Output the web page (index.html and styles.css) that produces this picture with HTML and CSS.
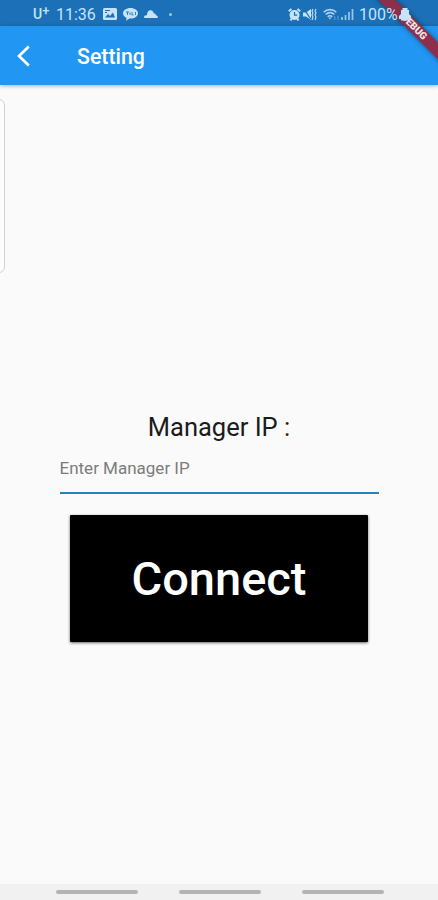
FILE: index.html
```
<!DOCTYPE html>
<html lang="en">
<head>
    <meta charset="UTF-8">
    <meta name="viewport" content="width=device-width, initial-scale=1.0">
    <title>Setting</title>
    <link rel="stylesheet" href="styles.css">
</head>

<body>
    <div class="screen">
        <div class="status-bar">
            <div class="status-left">
                <span class="carrier">U<sup>+</sup></span>
                <span class="time">11:36</span>
                <svg class="icon-picture" width="14" height="12" viewBox="0 0 14 12">
                    <rect width="14" height="12" rx="1.5" fill="currentColor"/>
                    <path d="M2 9.500L5 6l2 2 3-3.500 2 5z" fill="#1b70b8"/>
                    <path d="M2 2.500h5M2 4.500h2" stroke="#1b70b8" stroke-width="1"/>
                </svg>
                <svg class="icon-talk" width="15" height="13" viewBox="0 0 15 13">
                    <path d="M7.500 0C3.300 0 0 2.300 0 5.300c0 2 1.400 3.700 3.600 4.600L3 12.700l3.500-2.200 1 .1c4.200 0 7.500-2.400 7.500-5.300S11.700 0 7.500 0z" fill="currentColor"/>
                    <path d="M3 4h3M4.500 4v3M7 7V4.500M9 4v3h1.500M12.500 4v3" stroke="#1b70b8" stroke-width=".9" fill="none"/>
                </svg>
                <svg class="icon-cloud" width="14" height="8" viewBox="0 0 14 8">
                    <path d="M1.200 8C-.4 8-.3 5.800 1.300 5.500L3 5C3 2 4.500.3 6.500.3c1.800 0 2.800 1.200 3.200 2.900 1.300 0 2 .7 2.300 2 2 .3 2.600 2.800 1 2.800z" fill="currentColor"/>
                </svg>
                <span class="dot"></span>
            </div>
            <div class="status-right">
                <svg width="13" height="13" viewBox="0 0 13 13">
                    <path d="M.8 3.200L3.500 1M12.200 3.200L9.500 1M2.500 12.500l1.300-2M10.500 12.500l-1.300-2" stroke="currentColor" stroke-width="2"/>
                    <circle cx="6.500" cy="7" r="5" fill="currentColor"/>
                    <path d="M6.500 4v3.200h2.700" stroke="#1b70b8" stroke-width="1.200" fill="none"/>
                </svg>
                <svg class="icon-vibrate" width="14" height="13" viewBox="0 0 14 13">
                    <path d="M0 4.500h3L8 1v11L3 8.500H0z" fill="currentColor"/>
                    <path d="M1 1l7 10.500" stroke="#1b70b8" stroke-width="1.300"/>
                    <path d="M10 1l-1 2 1 2-1 2 1 2-1 3M13 1l-1 2 1 2-1 2 1 2-1 3" stroke="currentColor" stroke-width="1.100" fill="none"/>
                </svg>
                <svg class="icon-wifi" width="17" height="13" viewBox="0 0 17 13">
                    <path d="M.7 4.200C4 .7 10 .7 13.300 4.200M2.700 6.500c2.300-2.500 6.300-2.500 8.600 0M4.700 8.700c1.300-1.300 3.300-1.300 4.600 0" stroke="currentColor" stroke-width="1.600" fill="none"/>
                    <path d="M5.300 9.500h3.400L7 11.500z" fill="currentColor"/>
                    <path d="M11.800 8v4M15 8v4" stroke="currentColor" stroke-width="1.200" opacity=".4"/>
                </svg>
                <svg class="icon-signal" width="13" height="13" viewBox="0 0 13 13">
                    <path d="M1 9v3M4.500 7v5M8 4v8M11.500 1v11" stroke="currentColor" stroke-width="1.700"/>
                </svg>
                <span class="percent">100%</span>
                <svg class="icon-battery" width="12" height="13" viewBox="0 0 12 13">
                    <path d="M3.500 0h5v2H10v4l2 2v3h-2v1.500H2V11H0V8l2-2V2h1.500z" fill="currentColor"/>
                </svg>
            </div>
        </div>

        <header class="app-bar">
            <svg class="back" width="14" height="22" viewBox="0 0 14 22">
                <path d="M11.800 1.500L2 11l9.800 9.500" stroke="#fff" stroke-width="2.700" fill="none"/>
            </svg>
            <span class="title">Setting</span>
        </header>

        <main class="content">
            <form class="form" action="#">
                <label class="label" for="manager-ip">Manager IP :</label>
                <input class="ip-input" id="manager-ip" type="text" placeholder="Enter Manager IP">
                <button class="connect" type="button">Connect</button>
            </form>
        </main>

        <div class="nav-bar">
            <span class="nav-line"></span>
            <span class="nav-line"></span>
            <span class="nav-line"></span>
        </div>

        <!-- overlays -->
        <div class="edge-handle"></div>
        <div class="debug-banner">DEBUG</div>
    </div>
</body>

</html>
```

FILE: styles.css
```
* {
    box-sizing: border-box;
}

body {
    margin: 0;
    font-family: Roboto, "Liberation Sans", sans-serif;
}

.screen {
    position: relative;
    display: flex;
    flex-direction: column;
    width: 438px;
    height: 900px;
    overflow: hidden;
    background-color: #fafafa;
}

.status-bar {
    display: flex;
    justify-content: space-between;
    height: 26px;
    padding: 2px 27px 0 33px;
    background-color: #1b70b8;
    color: #c5e3fa;
}

/* the system icons stay above the debug banner */
.status-left,
.status-right {
    position: relative;
    z-index: 3;
    display: flex;
    align-items: center;
}

.carrier {
    width: 23px;
    font-size: 14px;
    font-weight: 500;
    line-height: 20px;
}

.carrier sup {
    font-size: 13px;
    line-height: 0;
    vertical-align: 4px;
}

.time {
    width: 47px;
    font-size: 16px;
}

.icon-talk {
    margin-left: 6px;
}

.icon-cloud {
    margin-left: 6px;
}

.dot {
    width: 3px;
    height: 3px;
    margin-left: 11px;
    border-radius: 50%;
    background-color: #8fc7ef;
}

.icon-vibrate {
    margin-left: 2px;
}

.icon-wifi {
    margin-left: 6px;
    opacity: .85;
}

.icon-signal {
    margin-left: 1px;
    opacity: .75;
}

.percent {
    width: 40px;
    margin-left: 5px;
    font-size: 16px;
}

.app-bar {
    z-index: 1;
    display: flex;
    align-items: center;
    height: 59px;
    padding: 1px 18px 0 17px;
    background-color: #2196f3;
    box-shadow: 0 1px 4px rgba(0, 0, 0, .3);
}

.title {
    margin-left: 46px;
    padding-top: 1px;
    color: #fff;
    font-size: 21.3px;
    font-weight: 500;
}

.content {
    flex: 1;
    display: flex;
    align-items: center;
    justify-content: center;
    padding-top: 84px;
}

.form {
    display: flex;
    flex-direction: column;
    align-items: center;
    width: 319px;
}

.label {
    color: #1c1c1c;
    font-size: 25.5px;
    line-height: 32px;
}

.ip-input {
    width: 100%;
    height: 51px;
    padding: 0;
    border: 0;
    border-bottom: 2px solid #2383c0;
    outline: 0;
    background: none;
    font-family: inherit;
    font-size: 17px;
}

.ip-input::placeholder {
    color: #7c7c7c;
    opacity: 1;
}

.connect {
    width: 298px;
    height: 127px;
    margin-top: 21px;
    padding: 0;
    border: 0;
    border-radius: 1px;
    background-color: #000;
    box-shadow: 0 1px 3px rgba(0, 0, 0, .6);
    color: #fff;
    font-family: inherit;
    font-size: 47px;
    font-weight: 500;
}

.nav-bar {
    display: flex;
    justify-content: center;
    gap: 41px;
    height: 16px;
    padding: 6px 0 0 1px;
    background-color: #f1f1f1;
}

.nav-line {
    width: 82px;
    height: 4px;
    border-radius: 2px;
    background-color: #b4b4b4;
}

.edge-handle {
    position: absolute;
    top: 99px;
    left: -11px;
    width: 16px;
    height: 174px;
    border: 1px solid #d2d2d2;
    border-radius: 6px;
    background-color: #fdfdfd;
}

.debug-banner {
    position: absolute;
    z-index: 2;
    top: 21px;
    left: 361px;
    width: 106px;
    height: 12px;
    transform: rotate(45deg);
    background-color: #8c2f4b;
    box-shadow: 0 0 5px rgba(0, 0, 0, .45);
    color: #f3e6ea;
    font-size: 10px;
    font-weight: 900;
    line-height: 12px;
    text-align: center;
}
```
